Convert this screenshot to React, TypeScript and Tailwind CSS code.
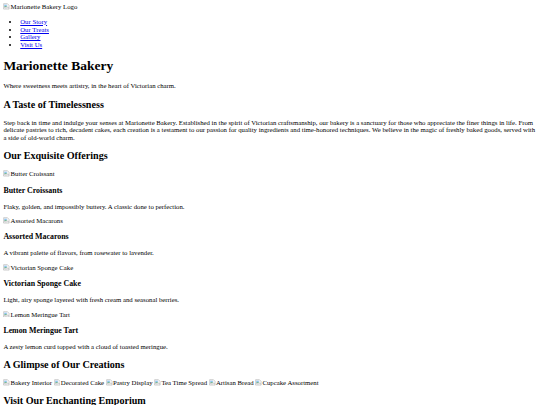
import * as React from 'react';

// the reference is a 1280px wide unstyled page shrunk to 540px
const Broken = ({ alt }: { alt: string }) => (
	<span className="inline">
		<svg
			width="16"
			height="16"
			viewBox="0 0 16 16"
			className="inline-block align-[-2px] mr-[1px]">
			<path d="M1.5 1.5h9l4 4v9h-13z" fill="#f4f4f4" stroke="#9a9a9a" />
			<path d="M3 4h6v5H3z" fill="#8fc3ef" />
			<path d="M3 9l2-2 2 1.5 2-1v1.5H3z" fill="#5aa83a" />
			<path d="M1.5 12l3-2 3 2.5 3-3 4 2.5" fill="none" stroke="#9a9a9a" />
		</svg>
		{alt}
	</span>
);

const links = ['Our Story', 'Our Treats', 'Gallery', 'Visit Us'];

const treats = [
	{ name: 'Butter Croissants', img: 'Butter Croissant', text: 'Flaky, golden, and impossibly buttery. A classic done to perfection.' },
	{ name: 'Assorted Macarons', img: 'Assorted Macarons', text: 'A vibrant palette of flavors, from rosewater to lavender.' },
	{ name: 'Victorian Sponge Cake', img: 'Victorian Sponge Cake', text: 'Light, airy sponge layered with fresh cream and seasonal berries.' },
	{ name: 'Lemon Meringue Tart', img: 'Lemon Meringue Tart', text: 'A zesty lemon curd topped with a cloud of toasted meringue.' },
];

const gallery = ['Bakery Interior', 'Decorated Cake', 'Pastry Display', 'Tea Time Spread', 'Artisan Bread', 'Cupcake Assortment'];

const H2 = ({ children }: { children: React.ReactNode }) => (
	<h2 className="text-[24px] font-bold my-[19.92px] leading-[27.6px]">{children}</h2>
);

export default function App() {
	return (
		<div className="[zoom:0.421875] bg-white text-black">
			<div className="m-[8px] text-[16px] leading-[18.4px] [font-family:'Liberation_Serif',serif]">
				<header>
					<div className="leading-[16px]">
						<Broken alt="Marionette Bakery Logo" />
					</div>
					<nav>
						<ul className="list-disc my-[16px] pl-[40px]">
							{links.map((l) => (
								<li key={l}>
									<a href="#" className="text-[#0000ee] underline">
										{l}
									</a>
								</li>
							))}
						</ul>
					</nav>
				</header>
				<h1 className="text-[32px] font-bold my-[21.44px] leading-[36.8px]">Marionette Bakery</h1>
				<p className="my-[16px]">Where sweetness meets artistry, in the heart of Victorian charm.</p>
				<H2>A Taste of Timelessness</H2>
				<p className="my-[16px]">
					Step back in time and indulge your senses at Marionette Bakery. Established in the spirit of Victorian
					craftsmanship, our bakery is a sanctuary for those who appreciate the finer things in life. From delicate
					pastries to rich, decadent cakes, each creation is a testament to our passion for quality ingredients and
					time-honored techniques. We believe in the magic of freshly baked goods, served with a side of old-world
					charm.
				</p>
				<H2>Our Exquisite Offerings</H2>
				{treats.map((t) => (
					<div key={t.name}>
						<div className="leading-[17.4px]">
							<Broken alt={t.img} />
						</div>
						<h3 className="text-[18.72px] font-bold my-[18.72px] leading-[21.5px]">{t.name}</h3>
						<p className="my-[16px]">{t.text}</p>
					</div>
				))}
				<H2>A Glimpse of Our Creations</H2>
				<div>
					{gallery.map((g, i) => (
						<React.Fragment key={g}>
							{i > 0 && ' '}
							<Broken alt={g} />
						</React.Fragment>
					))}
				</div>
				<H2>Visit Our Enchanting Emporium</H2>
			</div>
		</div>
	);
}
